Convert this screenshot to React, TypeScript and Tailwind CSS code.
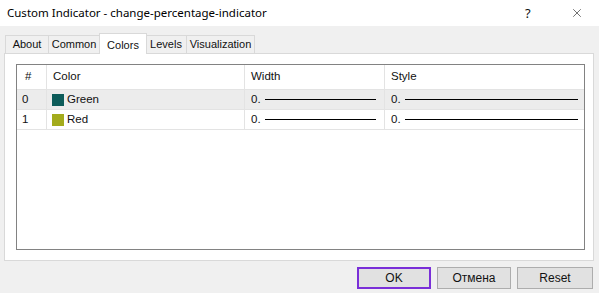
import { X } from 'lucide-react';

interface Row {
    index: number;
    name: string;
    color: string;
}

const rows: Row[] = [
    { index: 0, name: 'Green', color: '#0d5c5a' },
    { index: 1, name: 'Red', color: '#a3ab1c' },
];

const tabs = [
    { label: 'About', width: 'w-[44px]' },
    { label: 'Common', width: 'w-[52px]' },
    { label: 'Colors', width: 'w-[48px]' },
    { label: 'Levels', width: 'w-[42px]' },
    { label: 'Visualization', width: 'w-[69px]' },
];

function LineCell({ lineWidth }: { lineWidth: string }) {
    return (
        <div className="flex items-center pl-[6px] border-l border-[#e3e3e3]">
            <span>0.</span>
            <div className={`ml-[4px] h-px bg-black ${lineWidth}`} />
        </div>
    );
}

export default function App() {
    return (
        <div
            className="w-[599px] h-[293px] bg-[#f0f0f0] flex flex-col overflow-hidden text-[#111] text-[11.5px]"
            style={{ fontFamily: '"Liberation Sans", Arial, sans-serif' }}
        >
            {/* Title bar */}
            <div className="h-[26px] bg-white flex items-center pl-[7px]">
                <span className="text-[11.5px] text-black" style={{ fontFamily: '"Noto Sans", sans-serif' }}>
                    Custom Indicator - change-percentage-indicator
                </span>
                <div className="ml-auto flex items-center">
                    <span className="w-[12px] text-[13px] leading-none" style={{ fontFamily: '"Noto Sans", sans-serif' }}>?</span>
                    <X className="ml-[33px] mr-[15px] w-[14px] h-[14px] text-[#222]" strokeWidth={1.1} />
                </div>
            </div>

            {/* Tabs */}
            <div className="flex items-end h-[27px] pl-[5px] text-[11px]">
                {tabs.map(tab => {
                    const active = tab.label === 'Colors';
                    return (
                        <div
                            key={tab.label}
                            className={`${tab.width} flex justify-center whitespace-nowrap border-t border-l border-r border-[#d9d9d9] ${
                                active
                                    ? 'h-[21px] bg-white items-start pt-[3px] -mb-px relative z-10 -mx-px'
                                    : 'h-[18px] bg-[#f0f0f0] items-center -ml-px first:ml-0'
                            }`}
                        >
                            {tab.label}
                        </div>
                    );
                })}
            </div>

            {/* Panel */}
            <div className="ml-[4px] w-[590px] h-[208px] bg-white border border-[#d9d9d9] pl-[11px] pt-[10px]">
                <div className="w-[569px] h-[186px] border border-[#828282]">
                    <div className="grid grid-cols-[29px_198px_140px_1fr] h-[25px] border-b border-[#e3e3e3] items-center">
                        <div className="pl-[8px]">#</div>
                        <div className="pl-[6px] h-full flex items-center border-l border-[#e3e3e3]">Color</div>
                        <div className="pl-[6px] h-full flex items-center border-l border-[#e3e3e3]">Width</div>
                        <div className="pl-[6px] h-full flex items-center border-l border-[#e3e3e3]">Style</div>
                    </div>
                    {rows.map(row => (
                        <div
                            key={row.index}
                            className={`grid grid-cols-[29px_198px_140px_1fr] h-[20px] border-b border-[#e3e3e3] ${
                                row.index === 0 ? 'bg-[#ececec]' : 'bg-white'
                            }`}
                        >
                            <div className="pl-[5px] flex items-center">{row.index}</div>
                            <div className="flex items-center pl-[5px] border-l border-[#e3e3e3]">
                                <div className="w-[12px] h-[12px]" style={{ backgroundColor: row.color }} />
                                <span className="ml-[3px]">{row.name}</span>
                            </div>
                            <LineCell lineWidth="w-[111px]" />
                            <LineCell lineWidth="w-[173px]" />
                        </div>
                    ))}
                </div>
            </div>

            {/* Buttons */}
            <div className="flex justify-end gap-[6px] pr-[6px] pt-[6px] text-[12px]">
                <button className="w-[74px] h-[22px] bg-[#e1e1e1] border-2 border-[#7a2fd8]">OK</button>
                <button className="w-[74px] h-[22px] bg-[#e1e1e1] border border-[#adadad]">Отмена</button>
                <button className="w-[76px] h-[22px] bg-[#e1e1e1] border border-[#adadad]">Reset</button>
            </div>
        </div>
    );
}
